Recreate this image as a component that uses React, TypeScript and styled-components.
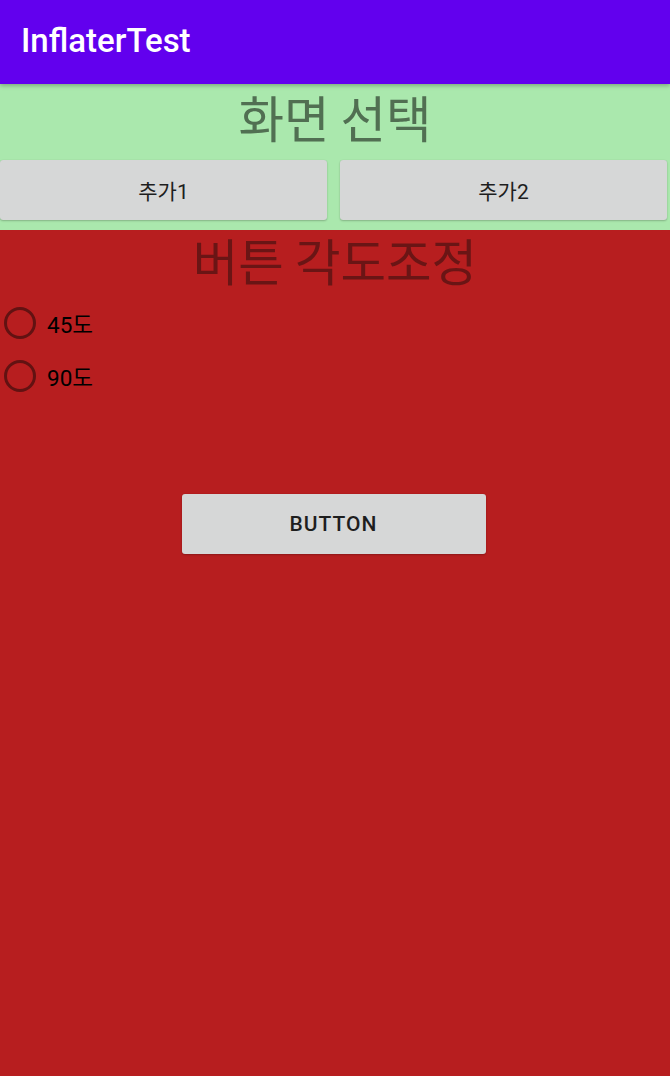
import React from "react";
import styled, { createGlobalStyle } from "styled-components";

const GlobalStyle = createGlobalStyle`
  html, body { margin: 0; padding: 0; }
  body {
    background: #b71e1f;
    font-family: Roboto, "Noto Sans CJK KR", sans-serif;
  }
  * { box-sizing: border-box; }
`;

const Screen = styled.div`
  width: 670px;
  height: 1076px;
  display: flex;
  flex-direction: column;
  overflow: hidden;
`;

const AppBar = styled.header`
  height: 84px;
  flex: none;
  background: #6200ee;
  display: flex;
  align-items: center;
  padding-left: 21px;
  position: relative;
  z-index: 2;
  box-shadow: 0 2px 4px rgba(0, 0, 0, 0.25);
`;

const AppTitle = styled.h1`
  margin: 0;
  color: #ffffff;
  font-family: Roboto, sans-serif;
  font-weight: 500;
  font-size: 33px;
  line-height: 1;
  padding-bottom: 4px;
`;

const Section = styled.section<{ $bg: string; $grow?: boolean }>`
  background: ${(p) => p.$bg};
  display: flex;
  flex-direction: column;
  flex: ${(p) => (p.$grow ? "1" : "none")};
  padding-bottom: ${(p) => (p.$grow ? "0" : "4px")};
`;

const SectionTitle = styled.h2<{ $color: string; $height: number; $line: number }>`
  margin: 0;
  height: ${(p) => p.$height}px;
  line-height: ${(p) => p.$line}px;
  text-align: center;
  font-family: "Noto Sans CJK KR", sans-serif;
  font-weight: 400;
  font-size: 49.5px;
  color: ${(p) => p.$color};
  white-space: nowrap;
`;

const ButtonRow = styled.div`
  display: grid;
  grid-template-columns: 327px 327px;
  column-gap: 13px;
  padding: 6px 0;
`;

const GrayButton = styled.button<{ $caps?: boolean }>`
  height: 60px;
  border: none;
  border-radius: 3px;
  background: #d6d7d7;
  box-shadow: 0 1px 2px rgba(0, 0, 0, 0.22), 0 0 1px rgba(0, 0, 0, 0.12);
  color: #1e1e1e;
  font-family: Roboto, "Noto Sans CJK KR", sans-serif;
  font-size: 21px;
  font-weight: ${(p) => (p.$caps ? 500 : 400)};
  letter-spacing: ${(p) => (p.$caps ? "0.05em" : "0")};
  padding: 0;
  cursor: pointer;
`;

const RadioList = styled.div`
  display: flex;
  flex-direction: column;
  gap: 5px;
`;

const RadioRow = styled.label`
  height: 48px;
  display: flex;
  align-items: center;
  padding-left: 4px;
  gap: 11px;
  font-family: Roboto, "Noto Sans CJK KR", sans-serif;
  font-size: 22.5px;
  color: #000000;
`;

const RadioCircle = styled.span`
  width: 32px;
  height: 32px;
  border-radius: 50%;
  border: 3px solid #621212;
  flex: none;
`;

const CenterArea = styled.div`
  display: flex;
  justify-content: center;
  margin-top: 88px;
  padding: 6px 3px 6px 0;
`;

const WideButton = styled(GrayButton)`
  width: 304px;
`;

export default function App() {
  return (
    <>
      <GlobalStyle />
      <Screen>
        <AppBar>
          <AppTitle>InflaterTest</AppTitle>
        </AppBar>
        <Section $bg="#aae8ad">
          <SectionTitle $color="#516f52" $height={70} $line={65}>
            화면 선택
          </SectionTitle>
          <ButtonRow>
            <GrayButton>추가1</GrayButton>
            <GrayButton>추가2</GrayButton>
          </ButtonRow>
        </Section>
        <Section $bg="#b71e1f" $grow>
          <SectionTitle $color="#6a1515" $height={69} $line={59}>
            버튼 각도조정
          </SectionTitle>
          <RadioList>
            <RadioRow>
              <RadioCircle />
              45도
            </RadioRow>
            <RadioRow>
              <RadioCircle />
              90도
            </RadioRow>
          </RadioList>
          <CenterArea>
            <WideButton $caps>BUTTON</WideButton>
          </CenterArea>
        </Section>
      </Screen>
    </>
  );
}
